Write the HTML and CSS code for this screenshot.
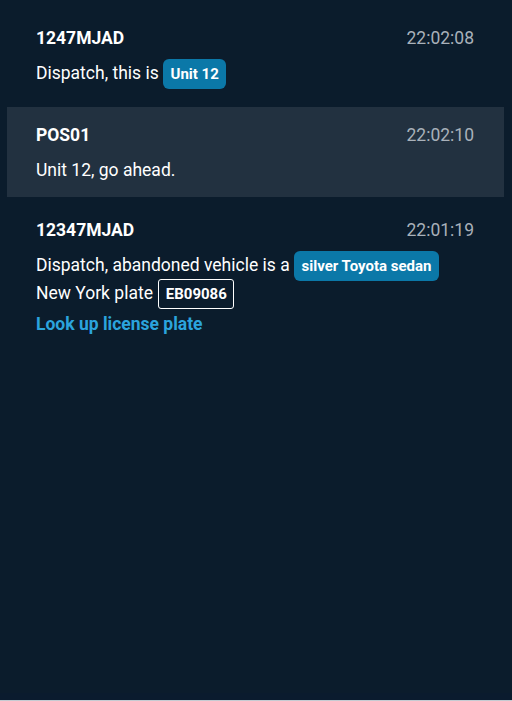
FILE: index.html
```html
<!DOCTYPE html>
<html lang="en">
<head>
    <meta charset="UTF-8">
    <meta name="viewport" content="width=device-width, initial-scale=1.0">
    <title>Dispatch Log</title>
    <link rel="stylesheet" href="styles.css">
</head>
<body>
    <div class="log">
        <div class="message">
            <div class="message-head">
                <span class="sender">1247MJAD</span>
                <span class="time">22:02:08</span>
            </div>
            <p class="message-text">Dispatch, this is <span class="tag">Unit 12</span></p>
        </div>

        <div class="message active">
            <div class="message-head">
                <span class="sender">POS01</span>
                <span class="time">22:02:10</span>
            </div>
            <p class="message-text">Unit 12, go ahead.</p>
        </div>

        <div class="message">
            <div class="message-head">
                <span class="sender">12347MJAD</span>
                <span class="time">22:01:19</span>
            </div>
            <p class="message-text">Dispatch, abandoned vehicle is a <span class="tag">silver Toyota sedan</span><br>New York plate <span class="plate">EB09086</span></p>
            <a class="action-link" href="#">Look up license plate</a>
        </div>
    </div>
    <div class="bottom-strip"></div>
</body>
</html>
```

FILE: styles.css
```css
html, body {
    height: 100%;
}
body {
    font-family: Roboto, 'Liberation Sans', sans-serif;
    background-color: #0b1c2c;
    color: #ffffff;
    margin: 0;
    padding: 0;
    display: flex;
    flex-direction: column;
}
.log {
    flex: 1;
    display: flex;
    flex-direction: column;
    gap: 5px;
    padding: 10px 8px 0 7px;
}
.message {
    padding: 16px 30px 14px 29px;
}
.message.active {
    background-color: #223140;
}
.message-head {
    display: flex;
    justify-content: space-between;
    align-items: baseline;
    font-size: 17.5px;
    line-height: 24px;
}
.sender {
    font-weight: 700;
}
.time {
    color: #a9b1ba;
}
.message-text {
    margin: 10px 0 0;
    font-size: 17.5px;
    line-height: 26.5px;
}
.tag, .plate {
    font-size: 15px;
    font-weight: 700;
    padding: 6px 7.5px;
    border-radius: 6px;
}
.tag {
    background-color: #0b78a8;
}
.plate {
    padding: 5px 6.5px;
    border: 1px solid #ffffff;
    border-radius: 3px;
    margin-left: 1px;
}
.action-link {
    display: block;
    margin-top: 4px;
    font-size: 17.5px;
    line-height: 26.5px;
    font-weight: 700;
    color: #2ba4dd;
    text-decoration: none;
}
.bottom-strip {
    height: 7px;
    background-color: #0a1b2e;
    border-bottom: 1px solid #c5cbd2;
}
```
